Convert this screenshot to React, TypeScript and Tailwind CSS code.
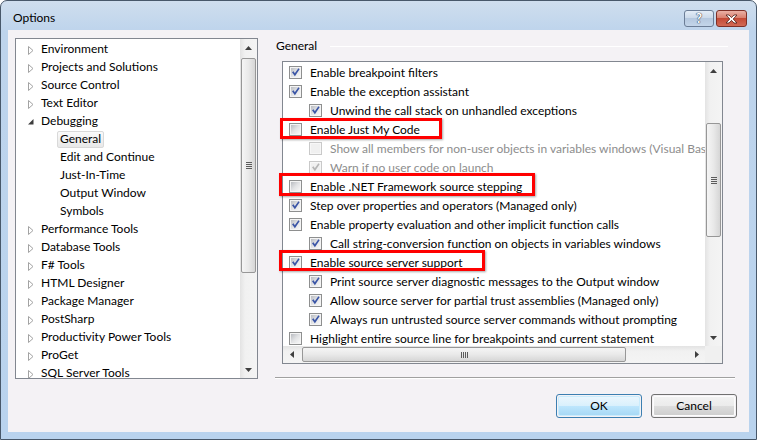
import React from 'react';

type TreeKind = 'c' | 'e' | 'child' | 'sel';
const treeItems: { t: string; k: TreeKind }[] = [
  { t: 'Environment', k: 'c' },
  { t: 'Projects and Solutions', k: 'c' },
  { t: 'Source Control', k: 'c' },
  { t: 'Text Editor', k: 'c' },
  { t: 'Debugging', k: 'e' },
  { t: 'General', k: 'sel' },
  { t: 'Edit and Continue', k: 'child' },
  { t: 'Just-In-Time', k: 'child' },
  { t: 'Output Window', k: 'child' },
  { t: 'Symbols', k: 'child' },
  { t: 'Performance Tools', k: 'c' },
  { t: 'Database Tools', k: 'c' },
  { t: 'F# Tools', k: 'c' },
  { t: 'HTML Designer', k: 'c' },
  { t: 'Package Manager', k: 'c' },
  { t: 'PostSharp', k: 'c' },
  { t: 'Productivity Power Tools', k: 'c' },
  { t: 'ProGet', k: 'c' },
  { t: 'SQL Server Tools', k: 'c' },
];

const opts: { t: string; ind?: boolean; on: boolean; dis?: boolean }[] = [
  { t: 'Enable breakpoint filters', on: true },
  { t: 'Enable the exception assistant', on: true },
  { t: 'Unwind the call stack on unhandled exceptions', ind: true, on: true },
  { t: 'Enable Just My Code', on: false },
  { t: 'Show all members for non-user objects in variables windows (Visual Basic only)', ind: true, on: false, dis: true },
  { t: 'Warn if no user code on launch', ind: true, on: true, dis: true },
  { t: 'Enable .NET Framework source stepping', on: false },
  { t: 'Step over properties and operators (Managed only)', on: true },
  { t: 'Enable property evaluation and other implicit function calls', on: true },
  { t: 'Call string-conversion function on objects in variables windows', ind: true, on: true },
  { t: 'Enable source server support', on: true },
  { t: 'Print source server diagnostic messages to the Output window', ind: true, on: true },
  { t: 'Allow source server for partial trust assemblies (Managed only)', ind: true, on: true },
  { t: 'Always run untrusted source server commands without prompting', ind: true, on: true },
  { t: 'Highlight entire source line for breakpoints and current statement', on: false },
];

function CheckBox({ on, dis }: { on: boolean; dis?: boolean }) {
  return (
    <span
      className={
        dis
          ? 'relative w-[13px] h-[13px] shrink-0 border border-[#c9c9c9] bg-[#f7f7f7]'
          : 'relative w-[13px] h-[13px] shrink-0 border border-[#8e8f8f] bg-[#f4f4f4]'
      }
    >
      <span
        className={
          dis
            ? 'absolute left-[1px] top-[1px] w-[9px] h-[9px] bg-[#f0f0f0]'
            : 'absolute left-[1px] top-[1px] w-[9px] h-[9px] bg-gradient-to-br from-[#b9bcc1] via-[#e2e3e5] to-[#f7f7f7]'
        }
      />
      {on && (
        <svg className="absolute left-0 top-0" width="11" height="11" viewBox="0 0 11 11">
          <polygon
            points="2,5.2 3.6,4.2 4.8,6.2 8.4,1.2 9.6,2.2 4.9,9.2"
            fill={dis ? '#b5b5b5' : '#3a55a6'}
          />
        </svg>
      )}
    </span>
  );
}

function ArrowUp() {
  return (
    <svg width="7" height="4" viewBox="0 0 7 4">
      <polygon points="3.5,0 7,4 0,4" fill="#3f3f3f" />
    </svg>
  );
}
function ArrowDown() {
  return (
    <svg width="7" height="4" viewBox="0 0 7 4">
      <polygon points="0,0 7,0 3.5,4" fill="#3f3f3f" />
    </svg>
  );
}
function ArrowLeft() {
  return (
    <svg width="4" height="7" viewBox="0 0 4 7">
      <polygon points="4,0 4,7 0,3.5" fill="#3f3f3f" />
    </svg>
  );
}
function ArrowRight() {
  return (
    <svg width="4" height="7" viewBox="0 0 4 7">
      <polygon points="0,0 4,3.5 0,7" fill="#3f3f3f" />
    </svg>
  );
}

function VGrip() {
  return (
    <div className="flex flex-col gap-[1px] items-center">
      <div className="w-[6px] h-px bg-[#5c5c5c]" />
      <div className="w-[6px] h-px bg-[#5c5c5c]" />
      <div className="w-[6px] h-px bg-[#5c5c5c]" />
      <div className="w-[6px] h-px bg-[#5c5c5c]" />
    </div>
  );
}
function HGrip() {
  return (
    <div className="flex flex-row gap-[1px] items-center">
      <div className="h-[6px] w-px bg-[#5c5c5c]" />
      <div className="h-[6px] w-px bg-[#5c5c5c]" />
      <div className="h-[6px] w-px bg-[#5c5c5c]" />
      <div className="h-[6px] w-px bg-[#5c5c5c]" />
    </div>
  );
}

function TreeArrow({ k }: { k: TreeKind }) {
  if (k === 'e') {
    return (
      <svg width="6" height="6" viewBox="0 0 6 6" className="mt-[2px]">
        <polygon points="5.5,0 5.5,5.5 0,5.5" fill="#3d3d3d" />
      </svg>
    );
  }
  return (
    <svg width="6" height="9" viewBox="0 0 6 9" className="mt-[3px]">
      <polygon points="0.5,0.5 5,4.5 0.5,8.5" fill="#ffffff" stroke="#a3a3a3" strokeWidth="1" />
    </svg>
  );
}

function PushButton({ label, def }: { label: string; def?: boolean }) {
  return (
    <div
      className={
        def
          ? 'w-[86px] h-[24px] rounded-[3px] border border-[#3c7fb1] p-px'
          : 'w-[86px] h-[24px] rounded-[3px] border border-[#707070] p-px'
      }
    >
      <div
        className={
          def
            ? 'w-full h-full rounded-[2px] border border-[#c9ecfd] bg-[linear-gradient(to_bottom,#eaf6fd_0%,#d9f0fc_50%,#bee6fd_50%,#a7d9f5_100%)] flex items-center justify-center text-[12px] text-black'
            : 'w-full h-full rounded-[2px] border border-[#fcfcfc] bg-[linear-gradient(to_bottom,#f2f2f2_0%,#ebebeb_50%,#dddddd_50%,#cfcfcf_100%)] flex items-center justify-center text-[12px] text-black'
        }
      >
        {label}
      </div>
    </div>
  );
}

export default function App() {
  return (
    <div className="relative w-[757px] h-[440px] overflow-hidden [font-family:Lato,sans-serif] text-black">
      <div className="w-full h-full flex flex-col rounded-t-[7px] border border-[#48586a] bg-[linear-gradient(to_bottom,#cfdeee_0px,#bed4ec_30px,#b9d3ee_100%)]">
        {/* title bar */}
        <div className="h-[29px] flex items-start shrink-0">
          <div className="ml-[12px] mt-[9px] text-[12px] leading-[16px] text-black">Options</div>
          <div className="flex-1" />
          <div className="mt-[9px] mr-[9px] flex gap-[2px]">
            <div className="w-[30px] h-[17px] rounded-[3px] border border-[#6b7d96] bg-[linear-gradient(to_bottom,#e4edf7_0%,#ccdaea_45%,#b5c8df_50%,#c3d5ea_100%)] flex items-center justify-center">
              <span className="text-[13px] leading-[13px] font-bold text-white [text-shadow:0_0_1px_#3a4a60,0_0_1px_#3a4a60,0_0_1px_#3a4a60]">?</span>
            </div>
            <div className="w-[31px] h-[17px] rounded-[3px] border border-[#7e2f26] bg-[linear-gradient(to_bottom,#eab1a6_0%,#d9806f_45%,#c44a36_50%,#d26a55_100%)] flex items-center justify-center">
              <svg width="13" height="10" viewBox="0 0 13 10">
                <path
                  d="M1,1 L4,1 L6.5,3.6 L9,1 L12,1 L8.2,5 L12,9 L9,9 L6.5,6.4 L4,9 L1,9 L4.8,5 Z"
                  fill="#ffffff"
                  stroke="#4a1a14"
                  strokeWidth="0.8"
                  strokeLinejoin="round"
                />
              </svg>
            </div>
          </div>
        </div>

        {/* client area */}
        <div className="mx-[7px] h-[402px] bg-[#f4f2f5] flex items-start">
          {/* tree */}
          <div className="ml-[7px] mt-[8px] w-[243px] h-[341px] border border-[#828790] bg-white flex">
            <div className="flex-1 overflow-hidden flex flex-col pt-px">
              {treeItems.map((it) => (
                <div key={it.t} className="h-[18px] shrink-0 flex items-center text-[12px] whitespace-nowrap">
                  {it.k === 'c' || it.k === 'e' ? (
                    <>
                      <div className="ml-[12px] w-[13px] h-[18px] flex items-center">
                        <TreeArrow k={it.k} />
                      </div>
                      <span>{it.t}</span>
                    </>
                  ) : (
                    <span
                      className={
                        it.k === 'sel'
                          ? 'ml-[41px] h-[17px] px-[2px] flex items-center rounded-[2px] border border-[#d9d9d9] bg-[linear-gradient(to_bottom,#fafafa,#e8e8e8)]'
                          : 'ml-[41px] h-[17px] px-[2px] flex items-center border border-transparent'
                      }
                    >
                      {it.t}
                    </span>
                  )}
                </div>
              ))}
            </div>
            {/* vertical scrollbar */}
            <div className="w-[17px] flex flex-col bg-[linear-gradient(to_right,#e3e3e3,#f1f1f1_30%,#f4f4f4)]">
              <div className="h-[17px] flex items-center justify-center shrink-0">
                <ArrowUp />
              </div>
              <div className="flex-1 flex flex-col">
                <div className="mt-[2px] mx-[1px] h-[215px] rounded-[2px] border border-[#979797] bg-[linear-gradient(to_right,#f5f5f5,#e9e9e9_50%,#d6d6d6)] flex items-center justify-center">
                  <VGrip />
                </div>
              </div>
              <div className="h-[17px] flex items-center justify-center shrink-0">
                <ArrowDown />
              </div>
            </div>
          </div>

          {/* right column */}
          <div className="ml-[17px] mt-[8px] w-[462px] flex flex-col">
            <div className="h-[16px] flex items-center pl-[1px] pr-[9px]">
              <span className="text-[12px] leading-[16px]">General</span>
              <div className="flex-1 ml-[13px] h-px bg-[#a0a0a0] border-b border-white" />
            </div>

            <div className="ml-[7px] mt-[7px] w-[441px] h-[303px] border border-[#828790] bg-white flex flex-col">
              <div className="flex h-[284px]">
                <div className="flex-1 overflow-hidden flex flex-col pt-px">
                  {opts.map((o) => (
                    <div
                      key={o.t}
                      className={
                        o.ind
                          ? 'h-[19px] shrink-0 flex items-center gap-[8px] pl-[26px] text-[12px] whitespace-nowrap'
                          : 'h-[19px] shrink-0 flex items-center gap-[8px] pl-[6px] text-[12px] whitespace-nowrap'
                      }
                    >
                      <CheckBox on={o.on} dis={o.dis} />
                      <span className={o.dis ? 'text-[#8d8d8d]' : 'text-black'}>{o.t}</span>
                    </div>
                  ))}
                </div>
                <div className="w-[17px] flex flex-col bg-[linear-gradient(to_right,#e3e3e3,#f1f1f1_30%,#f4f4f4)]">
                  <div className="h-[17px] flex items-center justify-center shrink-0">
                    <ArrowUp />
                  </div>
                  <div className="flex-1 flex flex-col">
                    <div className="mt-[44px] mx-[1px] h-[114px] rounded-[2px] border border-[#979797] bg-[linear-gradient(to_right,#f5f5f5,#e9e9e9_50%,#d6d6d6)] flex items-center justify-center">
                      <VGrip />
                    </div>
                  </div>
                  <div className="h-[17px] flex items-center justify-center shrink-0">
                    <ArrowDown />
                  </div>
                </div>
              </div>
              <div className="flex h-[17px]">
                <div className="flex-1 flex bg-[linear-gradient(to_bottom,#e3e3e3,#f1f1f1_30%,#f4f4f4)]">
                  <div className="w-[17px] flex items-center justify-center shrink-0">
                    <ArrowLeft />
                  </div>
                  <div className="flex-1 flex">
                    <div className="ml-[2px] my-[1px] w-[324px] rounded-[2px] border border-[#979797] bg-[linear-gradient(to_bottom,#f5f5f5,#e9e9e9_50%,#d6d6d6)] flex items-center justify-center">
                      <HGrip />
                    </div>
                  </div>
                  <div className="w-[17px] flex items-center justify-center shrink-0">
                    <ArrowRight />
                  </div>
                </div>
                <div className="w-[17px] bg-[#f0f0f0]" />
              </div>
            </div>

            <div className="mt-[13px] w-[460px] h-px bg-[#a0a0a0] border-b border-white box-content" />

            <div className="mt-[15px] flex justify-end gap-[9px]">
              <PushButton label="OK" def />
              <PushButton label="Cancel" />
            </div>
          </div>
        </div>
      </div>

      {/* red annotation boxes */}
      <div className="absolute left-[280px] top-[118px] w-[162px] h-[21px] border-[3px] border-[#ff0000] shadow-[1px_1px_2px_rgba(0,0,0,0.35)]" />
      <div className="absolute left-[279px] top-[173px] w-[256px] h-[23px] border-[3px] border-[#ff0000] shadow-[1px_1px_2px_rgba(0,0,0,0.35)]" />
      <div className="absolute left-[279px] top-[250px] w-[206px] h-[21px] border-[3px] border-[#ff0000] shadow-[1px_1px_2px_rgba(0,0,0,0.35)]" />
    </div>
  );
}
